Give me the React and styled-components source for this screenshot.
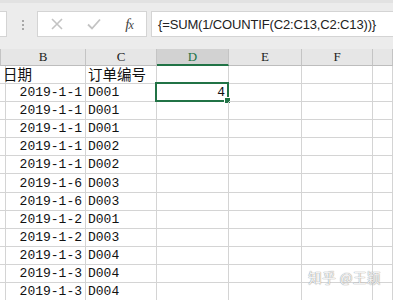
import React from 'react'
import styled, {createGlobalStyle} from 'styled-components'

const GlobalStyle = createGlobalStyle`
  html, body {
    margin: 0;
    padding: 0;
    background: #fff;
    overflow: hidden;
  }
  body {
    font-family: "Liberation Sans", "Noto Sans CJK SC", sans-serif;
  }
`

const Page = styled.div`
  position: relative;
  width: 393px;
  height: 300px;
  overflow: hidden;
  background: #fff;
`

const Toolbar = styled.div`
  display: flex;
  align-items: flex-start;
  height: 49px;
  padding-top: 8px;
  box-sizing: border-box;
  background: #ececec;
  border-top: 3px solid #e2e2e2;
`

const Box = styled.div`
  display: flex;
  align-items: center;
  height: 26px;
  box-sizing: border-box;
  background: #fff;
  border: 1px solid #d4d4d4;
  margin-left: ${p => p.gap || 0}px;
  width: ${p => (p.w ? p.w + 'px' : 'auto')};
  flex: ${p => (p.grow ? 1 : 'none')};
  overflow: hidden;
`

const Dots = styled.div`
  display: flex;
  flex-direction: column;
  gap: 2px;
  margin: 9px 0 0 15px;
  span {
    width: 2px;
    height: 2px;
    background: #a8a8a8;
  }
`

const IconSlot = styled.div`
  display: flex;
  align-items: center;
  justify-content: center;
  width: ${p => p.w}px;
  height: 100%;
`

const Fx = styled.span`
  font-family: "Liberation Serif", serif;
  font-style: italic;
  font-size: 15px;
  color: #444;
  letter-spacing: -1px;
  small {
    font-size: 12px;
  }
`

const Formula = styled.span`
  font-family: "Liberation Sans", sans-serif;
  font-size: 13px;
  letter-spacing: -0.15px;
  color: #222;
  padding-left: 6px;
  white-space: nowrap;
`

const Sheet = styled.div`
  display: grid;
  grid-template-columns: 1px 85px 71px 72px 73px 71px 1fr;
  grid-template-rows: 17px 18px;
  grid-auto-rows: 18.1px;
`

const HeadCell = styled.div`
  box-sizing: border-box;
  height: 17px;
  display: flex;
  align-items: center;
  justify-content: center;
  background: ${p => (p.active ? '#d2d2d2' : '#e6e6e6')};
  color: ${p => (p.active ? '#217346' : '#222')};
  border-right: 1px solid #c4c4c4;
  border-bottom: ${p => (p.active ? '2px solid #217346' : '1px solid #bdbdbd')};
  font-family: "Liberation Serif", serif;
  font-size: 13px;
`

const Cell = styled.div`
  position: relative;
  box-sizing: border-box;
  border-right: 1px solid #d4d4d4;
  border-bottom: 1px solid #d4d4d4;
  display: flex;
  align-items: center;
  justify-content: ${p => (p.right ? 'flex-end' : 'flex-start')};
  padding: 0 3px 0 2px;
  font-family: "Liberation Mono", "Noto Sans CJK SC", monospace;
  font-size: 13px;
  color: #111;
  white-space: nowrap;
`

const Han = styled.span`
  font-family: "Noto Sans CJK SC", sans-serif;
  font-size: 14.5px;
  line-height: 1;
`

const Selection = styled.div`
  position: absolute;
  left: -2px;
  top: -2px;
  right: -1px;
  bottom: -1px;
  border: 2px solid #217346;
  pointer-events: none;
  &::after {
    content: '';
    position: absolute;
    right: -4px;
    bottom: -4px;
    width: 5px;
    height: 5px;
    background: #217346;
    border: 1px solid #fff;
  }
`

const Watermark = styled.div`
  position: absolute;
  right: 12px;
  bottom: 13px;
  font-family: "Noto Sans CJK SC", sans-serif;
  font-size: 13.5px;
  color: rgba(255, 255, 255, 0.9);
  text-shadow: 0 0 1px #9a9a9a, 0 0 1px #9a9a9a;
  letter-spacing: 0.5px;
`

const rows = [
  ['2019-1-1', 'D001'],
  ['2019-1-1', 'D001'],
  ['2019-1-1', 'D001'],
  ['2019-1-1', 'D002'],
  ['2019-1-1', 'D002'],
  ['2019-1-6', 'D003'],
  ['2019-1-6', 'D003'],
  ['2019-1-2', 'D001'],
  ['2019-1-2', 'D003'],
  ['2019-1-3', 'D004'],
  ['2019-1-3', 'D004'],
  ['2019-1-3', 'D004'],
]

const App = () => {
  return (
    <Page>
      <GlobalStyle />
      <Toolbar>
        <Box w={9} gap={-2} />
        <Dots><span /><span /><span /></Dots>
        <Box w={110} gap={13}>
          <IconSlot w={38}>
            <svg width="12" height="12" viewBox="0 0 12 12">
              <path d="M1 1 L11 11 M11 1 L1 11" stroke="#c3c3c3" strokeWidth="1.6" fill="none" />
            </svg>
          </IconSlot>
          <IconSlot w={36}>
            <svg width="14" height="12" viewBox="0 0 14 12">
              <path d="M1 6.5 L5 10.5 L13 1.5" stroke="#c3c3c3" strokeWidth="1.8" fill="none" />
            </svg>
          </IconSlot>
          <IconSlot w={34}>
            <Fx>f<small>x</small></Fx>
          </IconSlot>
        </Box>
        <Box grow gap={4} style={{marginRight: -4}}>
          <Formula>{'{=SUM(1/COUNTIF(C2:C13,C2:C13))}'}</Formula>
        </Box>
      </Toolbar>
      <Sheet>
        <HeadCell />
        <HeadCell>B</HeadCell>
        <HeadCell>C</HeadCell>
        <HeadCell active>D</HeadCell>
        <HeadCell>E</HeadCell>
        <HeadCell>F</HeadCell>
        <HeadCell />

        <Cell />
        <Cell><Han>日期</Han></Cell>
        <Cell><Han>订单编号</Han></Cell>
        <Cell />
        <Cell />
        <Cell />
        <Cell />

        {rows.map(([date, id], i) => (
          <React.Fragment key={i}>
            <Cell />
            <Cell right>{date}</Cell>
            <Cell>{id}</Cell>
            <Cell right>
              {i === 0 ? '4' : ''}
              {i === 0 && <Selection />}
            </Cell>
            <Cell />
            <Cell />
            <Cell />
          </React.Fragment>
        ))}
      </Sheet>
      <Watermark>知乎 @王颖</Watermark>
    </Page>
  )
}

export default App
